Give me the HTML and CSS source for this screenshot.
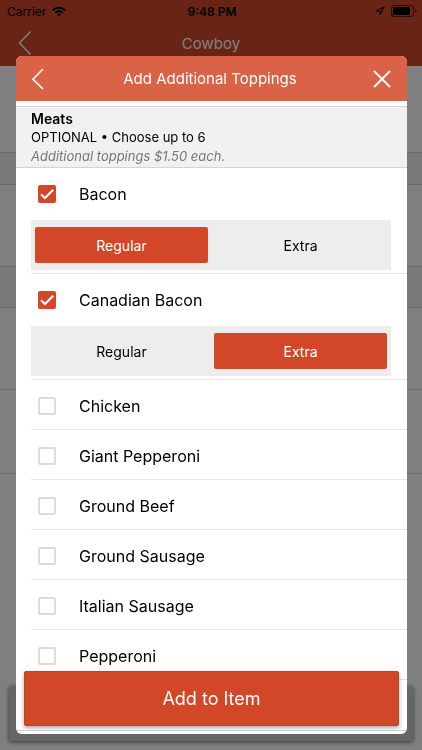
FILE: index.html
```html
<!DOCTYPE html>
<html lang="en">
<head>
<meta charset="utf-8">
<meta name="viewport" content="width=device-width, initial-scale=1">
<title>Add Additional Toppings</title>
<link rel="stylesheet" href="styles.css">
</head>
<body>
<div class="page">
  <header class="page-header">
    <div class="status">
      <div class="status-side">
        <span>Carrier</span>
        <svg width="14" height="11" viewBox="0 0 14 11" fill="none" stroke="#000" stroke-width="2"><path d="M.8 4.2a8.8 8.8 0 0 1 12.4 0M3.2 6.7a5.4 5.4 0 0 1 7.6 0"/><path d="M7 10.6 4.9 8.5a3 3 0 0 1 4.2 0z" fill="#000" stroke="none"/></svg>
      </div>
      <span class="time">9:48 PM</span>
      <div class="status-side status-right">
        <svg width="10" height="10" viewBox="0 0 10 10" fill="none" stroke="#000"><path d="M9 1 1 4.8l3.9.3.2 3.9z"/></svg>
        <svg width="26" height="12" viewBox="0 0 26 12"><rect x=".5" y=".5" width="22" height="11" rx="2.5" fill="none" stroke="#000" stroke-opacity=".6"/><rect x="2" y="2" width="17" height="8" rx="1"/><path d="M24 4v4q1.500-.6 1.500-2T24 4z" opacity=".6"/></svg>
      </div>
    </div>
    <div class="nav">
      <svg class="nav-back" width="14" height="26" viewBox="0 0 14 26" fill="none" stroke="#fff" stroke-width="1.500"><path d="M12.500 1.500 1.500 13l11 11.500"/></svg>
      <span>Cowboy</span>
    </div>
  </header>
  <div class="block block-first"></div>
  <div class="band"></div>
  <div class="block"></div>
  <div class="band band-tall"></div>
  <div class="block"></div>
  <div class="block block-lined"></div>
  <div class="block block-lined"></div>
  <div class="page-button"></div>
</div>

<div class="backdrop">
  <form class="modal">
    <header class="modal-header">
      <button type="button" class="icon-button" aria-label="Back"><svg width="14" height="24" viewBox="0 0 14 24" fill="none" stroke="#fff" stroke-width="1.600"><path d="M12 2 2 12.200 12 22"/></svg></button>
      <h1>Add Additional Toppings</h1>
      <button type="button" class="icon-button" aria-label="Close"><svg width="20" height="20" viewBox="0 0 20 20" fill="none" stroke="#fff" stroke-width="1.800"><path d="m2 2 16 16M18 2 2 18"/></svg></button>
    </header>
    <div class="list">
      <div class="section">
        <h2>Meats</h2>
        <p>OPTIONAL • Choose up to 6</p>
        <p class="note">Additional toppings $1.50 each.</p>
      </div>
      <ul>
        <li>
          <label class="topping"><input type="checkbox" checked><span>Bacon</span></label>
          <div class="amount">
            <label><input type="radio" name="bacon" checked><span>Regular</span></label>
            <label><input type="radio" name="bacon"><span>Extra</span></label>
          </div>
        </li>
        <li>
          <label class="topping"><input type="checkbox" checked><span>Canadian Bacon</span></label>
          <div class="amount">
            <label><input type="radio" name="canadian"><span>Regular</span></label>
            <label><input type="radio" name="canadian" checked><span>Extra</span></label>
          </div>
        </li>
        <li><label class="topping"><input type="checkbox"><span>Chicken</span></label></li>
        <li><label class="topping"><input type="checkbox"><span>Giant Pepperoni</span></label></li>
        <li><label class="topping"><input type="checkbox"><span>Ground Beef</span></label></li>
        <li><label class="topping"><input type="checkbox"><span>Ground Sausage</span></label></li>
        <li><label class="topping"><input type="checkbox"><span>Italian Sausage</span></label></li>
        <li><label class="topping"><input type="checkbox"><span>Pepperoni</span></label></li>
      </ul>
    </div>
    <div class="footer"><button type="submit" class="add">Add to Item</button></div>
  </form>
</div>
</body>
</html>
```
FILE: styles.css
```css
* { box-sizing: border-box; }

body {
  margin: 0;
  font-family: Inter, "Liberation Sans", sans-serif;
  font-size: 16px;
  color: #000;
}

h1, h2, p, ul { margin: 0; padding: 0; }
ul { list-style: none; }
svg { display: block; }

/* Page behind the dialog */
.page {
  position: relative;
  height: 100vh;
  overflow: hidden;
  background: #fff;
}

.page-header {
  height: 66px;
  background: #d04828;
}

.status {
  display: flex;
  align-items: center;
  height: 22px;
  padding: 0 5px 0 7px;
  font-size: 12px;
}

.status-side {
  flex: 1;
  display: flex;
  align-items: center;
  gap: 6px;
}

.status-right { justify-content: flex-end; }
.time { font-weight: 600; }

.nav {
  display: grid;
  grid-template-columns: 1fr auto 1fr;
  align-items: center;
  height: 42px;
  padding: 0 18px;
  color: #fff;
  font-size: 15px;
}

.block { height: 81px; }
.block-first { height: 86px; }
.block + .block-lined { border-top: 1px solid #dcdcdc; }
.block-lined { height: 84px; }

.band {
  height: 33px;
  background: #f2f2f2;
  border: solid #d4d4d4;
  border-width: 1px 0;
}

.band-tall { height: 42px; }

.page-button {
  position: absolute;
  inset: auto 9px 9px;
  height: 55px;
  border-radius: 2px;
  background: #ccc;
  box-shadow: 0 1px 4px rgba(0, 0, 0, .6);
}

/* Dialog */
.backdrop {
  position: fixed;
  inset: 0;
  padding: 56px 15px 16px 16px;
  background: rgba(0, 0, 0, .5);
}

.modal {
  position: relative;
  display: flex;
  flex-direction: column;
  height: 100%;
  overflow: hidden;
  border-radius: 6px;
  background: #fff;
}

.modal-header {
  display: flex;
  align-items: center;
  justify-content: space-between;
  flex: none;
  height: 45px;
  padding: 0 6px 0 3px;
  background: #d96247;
  color: #fff;
}

.modal-header h1 {
  font-size: 15px;
  font-weight: 400;
}

.icon-button {
  display: grid;
  place-items: center;
  width: 38px;
  height: 44px;
  padding: 0;
  border: 0;
  background: none;
}

.list {
  flex: 1;
  min-height: 0;
  padding-top: 5px;
  overflow: hidden;
}

.section {
  padding: 3px 15px 1px;
  border: solid #d2d5d2;
  border-width: 1px 0;
  background: #f1f1f1;
  font-size: 13px;
  line-height: 18px;
}

.section h2 {
  font-size: 14px;
  font-weight: 600;
}

.section .note {
  line-height: 20px;
  color: #777;
  font-style: italic;
}

li {
  margin-left: 15px;
  border-bottom: 1px solid #e6e6e6;
}

.topping {
  display: flex;
  align-items: center;
  gap: 23px;
  height: 49px;
  padding: 3px 0 0 7px;
}

.topping input {
  appearance: none;
  width: 18px;
  height: 18px;
  margin: 0;
  border: 2px solid #dcdcdc;
  border-radius: 2px;
  background: #fff;
}

.topping input:checked {
  border: 0;
  background: #d24727 url("data:image/svg+xml,%3Csvg xmlns='http://www.w3.org/2000/svg' viewBox='0 0 18 18'%3E%3Cpath d='M3 9.200 7 13l8.200-8.200' fill='none' stroke='white' stroke-width='2'/%3E%3C/svg%3E");
}

.amount {
  display: grid;
  grid-template-columns: 1fr 1fr;
  gap: 6px;
  height: 50px;
  margin: 3px 16px 3px 0;
  padding: 7px 4px;
  background: #ededed;
  font-size: 14px;
}

.amount label { position: relative; }

.amount input {
  position: absolute;
  inset: 0;
  margin: 0;
  opacity: 0;
}

.amount span {
  display: grid;
  place-items: center;
  height: 100%;
  border-radius: 2px;
}

.amount input:checked + span {
  background: #d24727;
  color: #fff;
}

/* Footer button floats over the end of the list */
.footer {
  position: absolute;
  inset: auto 0 0;
  padding: 0 8px 3px;
}

.footer::after {
  content: "";
  display: block;
  margin: 4px -8px 0;
  border-top: 1px solid #d0d0d0;
}

.add {
  display: block;
  width: 100%;
  height: 55px;
  border: 1px solid #bd4226;
  border-radius: 2px;
  background: #d24727;
  box-shadow: 0 2px 4px rgba(0, 0, 0, .35);
  color: #fff;
  font: inherit;
  font-size: 18px;
}
```
